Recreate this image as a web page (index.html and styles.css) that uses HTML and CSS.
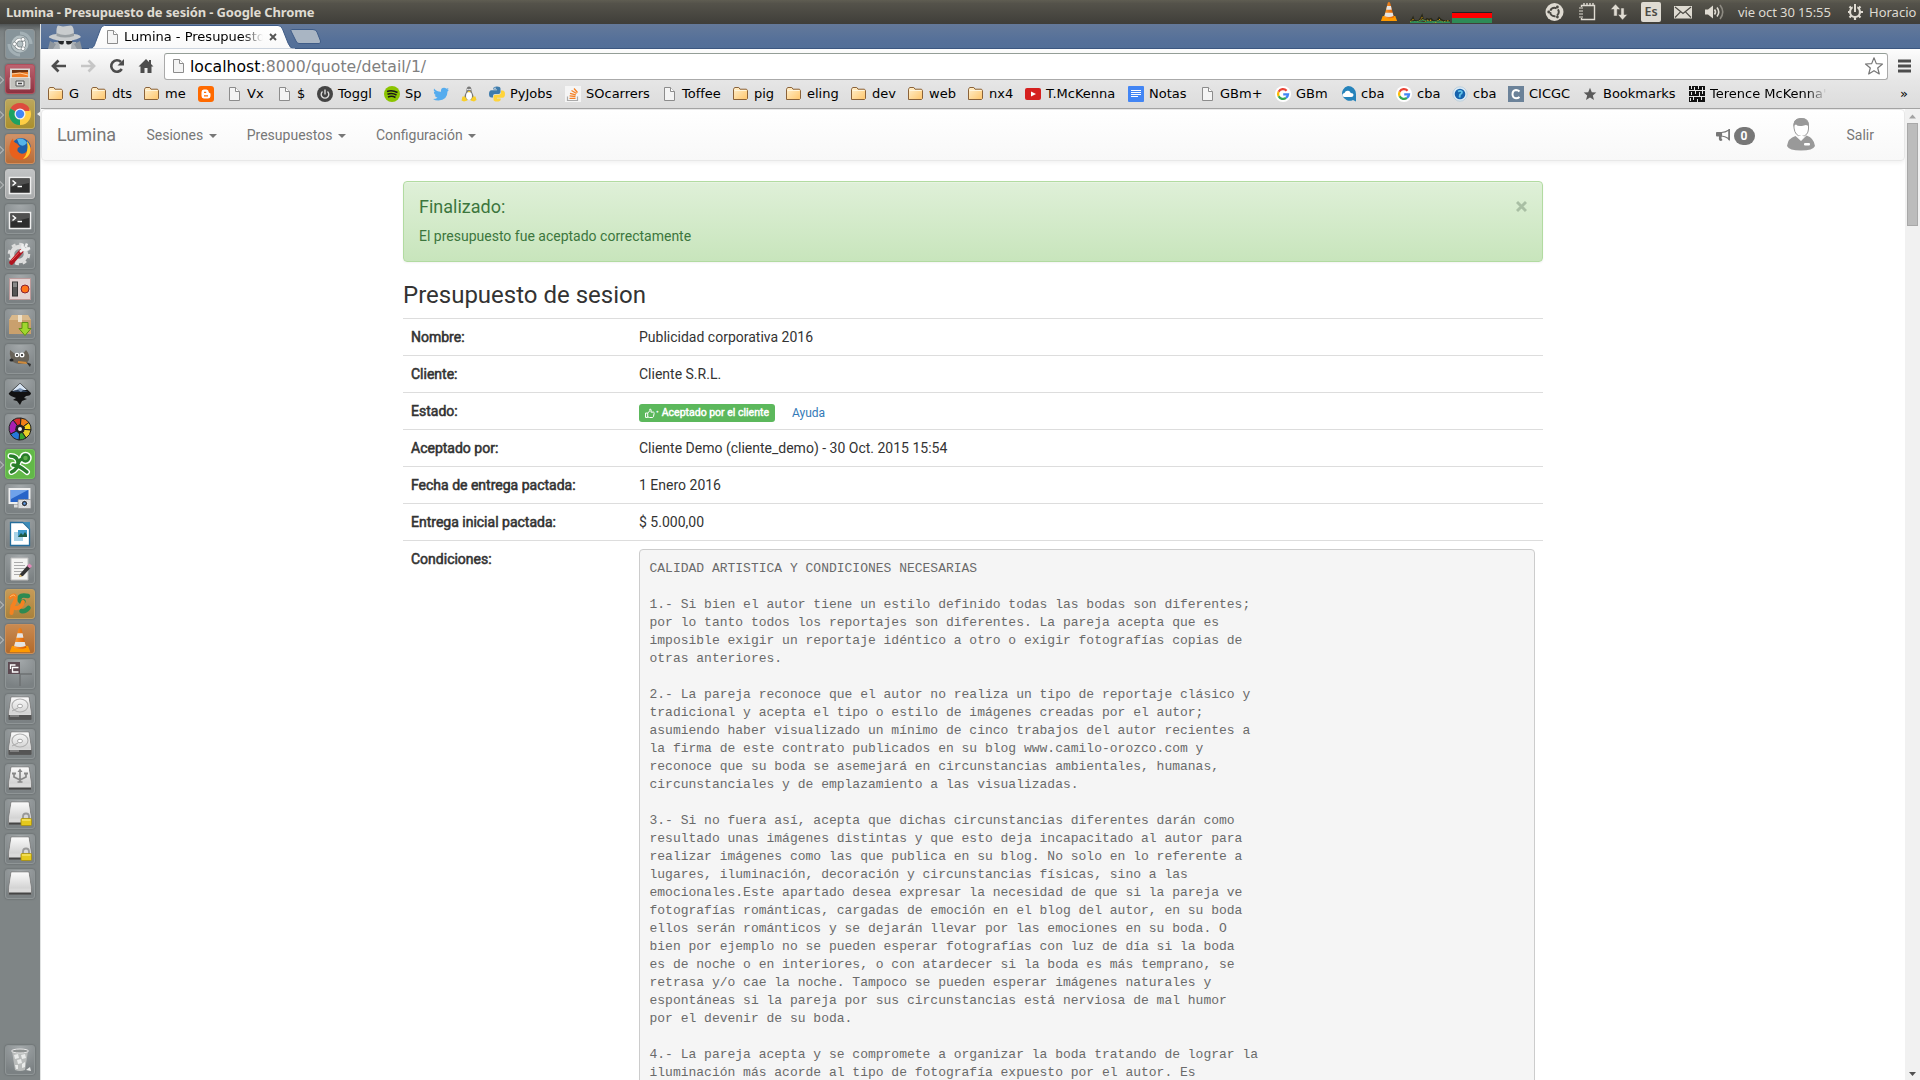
FILE: index.html
```html
<!DOCTYPE html>
<html lang="es">
<head>
<meta charset="utf-8">
<title>Lumina - Presupuesto de sesión</title>
<link rel="stylesheet" href="styles.css">
</head>
<body>
<svg class="defs" aria-hidden="true">
  <defs>
    <linearGradient id="gFolder" x1="0" y1="0" x2="1" y2="1"><stop offset="0" stop-color="#fff0cf"/><stop offset="1" stop-color="#ffc66b"/></linearGradient>
    <linearGradient id="gTab" x1="0" y1="0" x2="0" y2="1"><stop offset="0" stop-color="#fff"/><stop offset="1" stop-color="#f9f9f9"/></linearGradient>
    <linearGradient id="gDrive" x1="0" y1="0" x2="0" y2="1"><stop offset="0" stop-color="#fafafa"/><stop offset="1" stop-color="#d2d2d2"/></linearGradient>
    <linearGradient id="gCone" x1="0" y1="0" x2="1" y2="0"><stop offset="0" stop-color="#ffa033"/><stop offset="1" stop-color="#d85a00"/></linearGradient>
    <symbol id="folder" viewBox="0 0 16 16"><path d="M.5 13.500V3.200L1.600 1.500H5.800L7 3.200H13.500L14.500 4.500V12.500L13.500 13.500Z" fill="url(#gFolder)" stroke="#8a6239"/><path d="M1.500 4.500H13.500" stroke="#fff6dd"/></symbol>
    <symbol id="page" viewBox="0 0 16 16"><path d="M3.500 1.500H9.500L13.500 5.500V14.500H3.500Z" fill="#f4f4f4" stroke="#8c8c8c"/><path d="M9.500 1.500V5.500H13.500" fill="#fff" stroke="#8c8c8c"/></symbol>
    <symbol id="google" viewBox="0 0 16 16"><circle cx="8" cy="8" r="8" fill="#fff"/><g fill="none" stroke-width="2.300"><path d="M11.600 4.700A5 5 0 0 0 3.600 5.700" stroke="#ea4335"/><path d="M3.600 5.700A5 5 0 0 0 3.600 10.300" stroke="#fbbc05"/><path d="M3.600 10.300A5 5 0 0 0 11 11.900" stroke="#34a853"/><path d="M11 11.900A5 5 0 0 0 13 8.300H8.200" stroke="#4285f4"/></g></symbol>
    <symbol id="cone" viewBox="0 0 20 22"><path d="M3 16L1 21.500H19L17 16Z" fill="#ff9a00"/><path d="M10 0.500C9 0.500 8.600 1.500 8.400 2.500L4.500 17.500Q10 20 15.500 17.500L11.600 2.500C11.400 1.500 11 .500 10 .500Z" fill="url(#gCone)"/><path d="M7.800 5H12.200L13 9H6.900ZM5.900 12.500H14.100L15 16Q10 18 5 16Z" fill="#e4e4e4"/></symbol>
    <symbol id="term" viewBox="0 0 30 30"><rect x="4.500" y="8.500" width="21" height="16" fill="#2d2d2d" stroke="#eee" stroke-width="1.500"/><path d="M6 10H24V14L6 18Z" fill="#505050"/><path d="M7.500 11.500L10.500 14L7.500 16.500M12.500 17.500H17" fill="none" stroke="#fff" stroke-width="1.500"/></symbol>
    <symbol id="drive" viewBox="0 0 30 30"><path d="M6 3H24L26.500 20V25H3.500V20Z" fill="#dadada" stroke="#777" stroke-width=".8"/><path d="M6.500 3.500H23.500L26 19.500H4Z" fill="url(#gDrive)"/><path d="M4 23.500H26V25.500H4Z" fill="#454545"/></symbol>
    <symbol id="hdd" viewBox="0 0 30 30"><use href="#drive"/><path d="M3.500 21H26.500V25.500H3.500Z" fill="#555"/><path d="M5 22H14" stroke="#aaa"/><ellipse cx="15" cy="11.500" rx="8" ry="6.500" fill="none" stroke="#b0b0b0" stroke-width="1.200"/><ellipse cx="15" cy="12" rx="2.500" ry="1.800" fill="#fff" stroke="#a8a8a8"/><path d="M7 17L13 14" stroke="#aaa"/></symbol>
    <symbol id="lockdrive" viewBox="0 0 30 30"><use href="#drive"/><path d="M18 20V17.500A3 3 0 0 1 24 17.500V20" fill="none" stroke="#999" stroke-width="1.800"/><rect x="16" y="19.500" width="10.500" height="7" rx="1" fill="#e5c91d" stroke="#a88f0c" stroke-width=".8"/><path d="M17 21H25.500" stroke="#fff18a"/></symbol>
  </defs>
</svg>

<div class="desktop">
  <header class="panel">
    <div class="panel-title">Lumina - Presupuesto de sesión - Google Chrome</div>
    <div class="indicators">
      <svg width="18" height="22"><use href="#cone" y="1" height="21"/></svg>
      <svg width="40" height="23"><path d="M0 22.500H40" stroke="#2e8b57" stroke-width="1"/><path d="M0 21L2 20L3 18L4 21H9L11 18L12 16L13 20L15 21L17 19L19 20L21 19L23 21H27L29 18L31 20L33 21H40" fill="none" stroke="#2a2a1a" stroke-width="2"/><path d="M0 21.500L2 21L3 19.500L4 21.500H9L11 19L12 17.500L13 20L15 21.500L17 20L19 21L21 20L23 22H27L29 19L31 21L33 22L36 21H40" fill="none" stroke="#ffb400" stroke-dasharray="1.500 1.500"/><path d="M0 22L11 21L13 20L20 22L28 21L33 22H40" fill="none" stroke="#2e8b57"/></svg>
      <svg width="40" height="24"><path d="M0 12H40V13H0Z" fill="#222"/><path d="M0 13H40V18H0Z" fill="#f00"/><path d="M0 18H40V23H0Z" fill="#2e8b57"/></svg>
      <svg width="19" height="24"><circle cx="9.500" cy="12" r="9" fill="#dfdbd2"/><circle cx="9.500" cy="12" r="4.300" fill="none" stroke="#4b4943" stroke-width="2" stroke-dasharray="7.500 1.500" stroke-dashoffset="3.500"/><g fill="#4b4943"><circle cx="3.700" cy="12" r="1.400"/><circle cx="12.400" cy="7" r="1.400"/><circle cx="12.400" cy="17" r="1.400"/></g></svg>
      <svg width="17" height="24"><g fill="none" stroke="#dfdbd2"><path d="M2.500 7V5.500H15.500V19.500H2.500V18M5 3V6M8 3V6M11 3V6M14 3V6" stroke-width="1.400"/><path d="M0 8H4M0 11H4M0 14H4M0 17H4" stroke-width="1.200"/></g></svg>
      <svg width="18" height="24"><path d="M5.500 4L10.500 9.500H7.200V16H3.800V9.500H.500ZM12.500 20L7.800 14.500H10.900V8H14.100V14.500H17.500Z" fill="#dfdbd2" stroke="#4b4943" stroke-width=".5"/></svg>
      <span class="kbd">Es</span>
      <svg width="18" height="24"><rect y="6" width="18" height="12.500" fill="#dfdbd2"/><path d="M1 7L9 13.500L17 7M1 17.500L6.500 11.800M17 17.500L11.500 11.800" fill="none" stroke="#4b4943" stroke-width="1.200"/></svg>
      <svg width="20" height="24"><path d="M0 9.500H3L8 5.500V18.500L3 14.500H0Z" fill="#dfdbd2"/><path d="M9.500 9.500Q11.500 12 9.500 14.500M12 7.500Q15.500 12 12 16.500" fill="none" stroke="#dfdbd2" stroke-width="1.600"/><path d="M15 5Q20.500 12 15 19" fill="none" stroke="#8d8a82" stroke-width="1.600"/></svg>
      <span class="clock">vie oct 30 15:55</span>
      <svg width="16" height="24"><circle cx="8" cy="12" r="5" fill="none" stroke="#dfdbd2" stroke-width="2.200"/><path d="M8 17V20M1 12H3M13 12H16M2.500 6.500L4.500 8.500M13.500 6.500L11.500 8.500M2.500 17.500L4.500 15.500M13.500 17.500L11.500 15.500" stroke="#dfdbd2" stroke-width="2.200"/><path d="M8 4V12" stroke="#4b4943" stroke-width="4.500"/><path d="M8 4V12" stroke="#dfdbd2" stroke-width="2"/></svg>
      <span class="user">Horacio</span>
    </div>
  </header>

  <div class="workspace">
    <aside class="launcher">
      <div class="tile t-ubuntu"><svg viewBox="0 0 30 30"><path d="M15 4A11 11 0 0 1 26 15M15 26A11 11 0 0 1 4 15" stroke="#a3b0b5" stroke-width="3" fill="none"/><circle cx="15" cy="15" r="8.500" fill="#b5c0c3"/><circle cx="15" cy="15" r="4.400" fill="none" stroke="#777f82" stroke-width="3.400"/><circle cx="15" cy="15" r="4.400" fill="none" stroke="#fff" stroke-width="2" stroke-dasharray="7.700 1.500" stroke-dashoffset="3.500"/><g fill="#fff" stroke="#777f82" stroke-width=".7"><circle cx="9.500" cy="15" r="1.900"/><circle cx="18" cy="10.300" r="1.900"/><circle cx="18" cy="19.700" r="1.900"/></g></svg></div>
      <div class="tile t-red run"><svg viewBox="0 0 30 30"><path d="M5 4.500H25V15H5Z" fill="#d8d8d4"/><path d="M7 6H23V14H7Z" fill="#6b3414"/><path d="M7 9L23 8V14H7Z" fill="#f07c24"/><path d="M7 10L15 9L23 11" stroke="#ffd0a0" fill="none"/><path d="M5 13.500H25V25H5Z" fill="#c2c2be" stroke="#eee" stroke-width=".7"/><path d="M11 17H19V22H11Z" fill="#eee" stroke="#555"/><path d="M13 19.500H17" stroke="#444" stroke-width="1.500"/></svg></div>
      <div class="tile t-yellow run active"><svg viewBox="0 0 30 30"><path d="M15 15L5.470 9.500A11 11 0 0 1 24.530 9.500Z" fill="#dd4b3e"/><path d="M15 15L5.470 9.500A11 11 0 0 0 15 26Z" fill="#1ca261"/><path d="M15 15L15 26A11 11 0 0 0 24.530 9.500Z" fill="#ffce44"/><path d="M15 9.500H24.500V12H15Z" fill="#dd4b3e"/><circle cx="15" cy="15" r="5.500" fill="#f2f2f2"/><circle cx="15" cy="15" r="4.200" fill="#4285f4"/></svg></div>
      <div class="tile t-orange run"><svg viewBox="0 0 30 30"><circle cx="16" cy="14" r="10" fill="#1e5fa8"/><path d="M12 5Q19 3 22 9Q18 14 14 10Z" fill="#55b4e8"/><path d="M5 10Q6 6 8 4.500Q8 8 12 9.500L15 13Q12 13 12.500 17Q15 21 20 19Q24 16 23.500 10Q27 14 26 18Q24 26 15 26Q6 25 4.500 17Q4 13 5 10Z" fill="#e8601c"/><path d="M22 7Q27 13 25 19Q23 24 18 25Q24 19 22 7Z" fill="#ffc933"/></svg></div>
      <div class="tile t-light run"><svg viewBox="0 0 30 30"><use href="#term"/></svg></div>
      <div class="tile"><svg viewBox="0 0 30 30"><use href="#term"/></svg></div>
      <div class="tile"><svg viewBox="0 0 30 30"><circle cx="14" cy="15" r="7" fill="none" stroke="#ddd" stroke-width="4.500"/><circle cx="14" cy="15" r="10" fill="none" stroke="#ddd" stroke-width="2.500" stroke-dasharray="4 3.850"/><path d="M6.500 23.500L16 12.500" stroke="#b01520" stroke-width="4.500" stroke-linecap="round"/><path d="M6.500 21.500L14 13.500" stroke="#f06060" stroke-width="1"/><path d="M15 13L20 8.500M18 5Q16 9.500 20.500 11L25 9M22 4.500L20.500 8" stroke="#eee" stroke-width="2.500" fill="none"/></svg></div>
      <div class="tile"><svg viewBox="0 0 30 30"><rect x="4.500" y="4.500" width="21" height="21" fill="#e3d3d3" stroke="#b99"/><rect x="7.500" y="8" width="5" height="14" fill="#555" stroke="#333"/><path d="M8 8.500H12V13H8Z" fill="#888"/><circle cx="20" cy="15" r="4" fill="#ff7418" stroke="#823"/></svg></div>
      <div class="tile"><svg viewBox="0 0 30 30"><path d="M7 6H23L26 11V25H4V11Z" fill="#c9a06d"/><path d="M7 6H23L26 11H4Z" fill="#d9b98c"/><path d="M13 6H17V13H13Z" fill="#eee0c8"/><path d="M17 13.500H23V19.500H26L20 26.500L14 19.500H17Z" fill="#9fd62d" stroke="#5d8f12"/></svg></div>
      <div class="tile"><svg viewBox="0 0 30 30"><path d="M5 6L10 10Q17 12 21 6Q25 10 24 16Q22 20 14 20Q7 19 6 15Q4 10 5 6Z" fill="#686258"/><circle cx="12" cy="11" r="2.300" fill="#fff"/><circle cx="17" cy="11" r="2.500" fill="#fff"/><g fill="#222"><circle cx="12" cy="11" r="1"/><circle cx="17" cy="11" r="1.100"/><ellipse cx="6.500" cy="16" rx="2" ry="1.500"/></g><path d="M13 18L22 19" stroke="#d08a3a" stroke-width="2"/><path d="M21 18L26 20L25 23Z" fill="#333"/></svg></div>
      <div class="tile"><svg viewBox="0 0 30 30"><path d="M15 4L26 14Q26 17 21 17L19 19L22 20L17 22L15 26L12 22L8 21L11 19L6 17Q3 15 4 14Z" fill="#111"/><path d="M15 4.500L22 11L18 11L16 13L13 11L7 12Z" fill="#d9e6f5"/><path d="M7 13H23L15 9Z" fill="#3d5a80" opacity=".6"/></svg></div>
      <div class="tile"><svg viewBox="0 0 30 30"><g stroke="#222" stroke-width="1"><path d="M15 15L8 6A11 11 0 0 1 16 4Z" fill="#d82c2c"/><path d="M15 15L16 4A11 11 0 0 1 24 8.500Z" fill="#f08018"/><path d="M15 15L24 8.500A11 11 0 0 1 26 16Z" fill="#f7d417"/><path d="M15 15L26 16A11 11 0 0 1 21 24Z" fill="#e8d028"/><path d="M15 15L21 24A11 11 0 0 1 14 26Z" fill="#38a52c"/><path d="M15 15L14 26A11 11 0 0 1 5.500 20Z" fill="#2878d8"/><path d="M15 15L5.500 20A11 11 0 0 1 8 6Z" fill="#a81eb0"/></g><path d="M15 10L20 13L19 18L14 20L10 16L11 12Z" fill="#222"/><circle cx="15" cy="15" r="2" fill="#eee"/></svg></div>
      <div class="tile t-green run"><svg viewBox="0 0 30 30"><g fill="none" stroke-linecap="round"><path d="M5.500 7Q12 7 13 13Q13 20 6.500 23M8 16Q14 16 22 23M13 15Q14 11 17 10" stroke="#fff" stroke-width="6"/><circle cx="20.500" cy="9" r="4" stroke="#fff" stroke-width="4.500"/><path d="M5.500 7Q12 7 13 13Q13 20 6.500 23M8 16Q14 16 22 23M13 15Q14 11 17 10" stroke="#287d2a" stroke-width="3.400"/><circle cx="20.500" cy="9" r="3.500" fill="#5fae4c" stroke="#287d2a" stroke-width="2.500"/></g></svg></div>
      <div class="tile"><svg viewBox="0 0 30 30"><rect x="4.500" y="5" width="20" height="14" fill="#2864c8" stroke="#eee" stroke-width="2"/><path d="M6 6H23L6 15Z" fill="#6fa2ea"/><path d="M9 22H15" stroke="#ddd" stroke-width="3"/><rect x="13" y="15.500" width="13" height="9" rx="1" fill="#d9dbdd" stroke="#888" stroke-width=".7"/><circle cx="19.500" cy="19.500" r="3.200" fill="#30363f" stroke="#fff"/><circle cx="19.500" cy="19.500" r="1.200" fill="#5d9be8"/></svg></div>
      <div class="tile"><svg viewBox="0 0 30 30"><path d="M5.500 3.500H18L24.500 10V26.500H5.500Z" fill="#fff" stroke="#256d9b" stroke-width="1.300"/><path d="M18 3H25V10Z" fill="#3d8cb8"/><path d="M9 13H18V22H9Z" fill="#a8d3e8"/><path d="M13 11H22V18H13Z" fill="#3f9acb"/><path d="M13 18L16 14L18 16L20 13L22 16V18Z" fill="#1d5b46"/></svg></div>
      <div class="tile"><svg viewBox="0 0 30 30"><path d="M6 4H23V26H6Z" fill="#f4f4f2" stroke="#bbb"/><path d="M9 8.500H18M9 11.500H20M9 14.500H20M9 17.500H18M9 20.500H15" stroke="#aaa"/><path d="M15 20L23 11L26 13.500L18 22L14 23Z" fill="#333"/><path d="M22 12L24.500 9.500L27 12L25 14.500Z" fill="#e38ab9"/><path d="M14 23L15 20.500L17.500 22.500Z" fill="#ecc97c"/></svg></div>
      <div class="tile t-gold run"><svg viewBox="0 0 30 30"><g fill="none" stroke-linecap="round"><path d="M23 7Q14 5 14.500 10.500Q15 14 18.500 12.500" stroke="#2d8a51" stroke-width="4.500"/><path d="M23.500 19Q20 23 16.500 22" stroke="#2d8a51" stroke-width="4.500"/><path d="M5.500 8.500Q9 4.500 10.500 8Q11 12 7.500 17L6.500 24M10 19Q16 20 18 13" stroke="#f58220" stroke-width="4"/><path d="M5.500 7.500Q9 4.500 10 7" stroke="#ffbd70"/></g></svg></div>
      <div class="tile t-vlc run"><svg viewBox="-3 -3 26 26"><use href="#cone" width="20" height="22"/></svg></div>
      <div class="tile"><svg viewBox="0 0 30 30"><path d="M3 3H15V15H3Z" fill="#5d4a52"/><path d="M15 15V27M15 15H27" stroke="#6d7173" stroke-width="1.500"/><path d="M5.500 10V6H10.500M13.500 8.500H7.500V13H13.500" fill="none" stroke="#fff" stroke-width="1.300"/></svg></div>
      <div class="tile"><svg viewBox="0 0 30 30"><use href="#hdd"/></svg></div>
      <div class="tile"><svg viewBox="0 0 30 30"><use href="#hdd"/></svg></div>
      <div class="tile"><svg viewBox="0 0 30 30"><use href="#drive"/><path d="M15 18V6M15 16L9 13V9.500M15 16L21 13V9.500M12.500 18H17.500" fill="none" stroke="#888" stroke-width="1.700"/><path d="M12.500 8L15 4.500L17.500 8Z" fill="#888"/><path d="M7 9.500H11M19 9.500H23" stroke="#888" stroke-width="2"/></svg></div>
      <div class="tile"><svg viewBox="0 0 30 30"><use href="#lockdrive"/></svg></div>
      <div class="tile"><svg viewBox="0 0 30 30"><use href="#lockdrive"/></svg></div>
      <div class="tile"><svg viewBox="0 0 30 30"><use href="#drive"/></svg></div>
      <div class="tile trash"><svg viewBox="0 0 30 30"><path d="M7 6L10 25Q15 27 20 25L23 6Z" fill="#b9bcbb"/><ellipse cx="15" cy="6" rx="8.500" ry="2" fill="#8e9291" stroke="#e5e5e5"/><g fill="#e9ebea"><path d="M9 10L13 9L14 13L10 14ZM16 10L20 9L21 13L17 14ZM12 15L16 14L17 18L13 19ZM10 20L13 20L13 24L11 24ZM17 19L20 17L20 22L17 23ZM21 25L25 22L26 26Z"/></g></svg></div>
    </aside>

    <section class="browser">
      <div class="tabstrip">
        <svg class="incognito" width="34" height="24" viewBox="0 0 34 24"><path d="M6 17L3 24H31L28 17Z" fill="#aab0b5"/><path d="M11 14H24L23 24H12Z" fill="#e0e2e3"/><path d="M10 0.500L15 1.500L23 .500Q26 1 26 9Q34 10 32.500 12.500Q17 20 1 12.500Q0 10 8.500 9Q8 2 10 .500Z" fill="#c9ccce"/><path d="M8.500 8Q17 12 26 8V11Q17 14 8.500 11Z" fill="#999fa3"/><path d="M10 16H16L15.500 19Q12 20.500 10.500 17.500ZM18 16H24.500L24 17.500Q22.500 20.500 18.500 19Z" fill="#26282a"/><path d="M2 16L8 19L5 24H0ZM32 16L26 19L29 24H34Z" fill="#8d959d"/></svg>
        <div class="tab">
          <svg class="tab-shape" width="206" height="25" viewBox="0 0 206 25"><path d="M0 25C5 24.500 5.500 21 7 17L11.500 5Q12.500 1.500 15.500 1.500H189Q192 1.500 193.500 5L199 19Q201 24.500 205 25Z" fill="url(#gTab)" stroke="#3f5c87" stroke-width="1"/><path d="M0 25H206" stroke="#fdfdfd" stroke-width="1"/></svg>
          <svg class="tab-icon" width="16" height="16"><use href="#page"/></svg>
          <span class="tab-title">Lumina - Presupuesto</span>
          <svg class="tab-close" width="8" height="8"><path d="M1 1L7 7M7 1L1 7" stroke="#555" stroke-width="1.900"/></svg>
        </div>
        <svg class="newtab" width="32" height="16"><path d="M1.500 .500H23Q26 .500 27 3L30.500 12Q31 14.500 29 14.500H9Q7 14.500 6 12L1 2Q.500 .500 1.500 .500Z" fill="#a9b5c3" stroke="#3f5c87"/></svg>
      </div>

      <div class="toolbar">
        <svg width="16" height="16"><path d="M7.500 2.500L2 8L7.500 13.500M2.500 8H15" fill="none" stroke="#4d4d4d" stroke-width="2.700"/></svg>
        <svg width="16" height="16"><path d="M8.500 2.500L14 8L8.500 13.500M13.500 8H1" fill="none" stroke="#c6c6c6" stroke-width="2.700"/></svg>
        <svg width="16" height="16"><path d="M12.800 11A5.700 5.700 0 1 1 12 4" fill="none" stroke="#4d4d4d" stroke-width="2.600"/><path d="M15 1V7.500H8.500Z" fill="#4d4d4d"/></svg>
        <svg width="16" height="16"><path d="M8 1L11 4V2H13V6L15.500 8.500H13.500V15H9.500V10H6.500V15H2.500V8.500H.500Z" fill="#4d4d4d"/></svg>
        <div class="omnibox">
          <svg width="16" height="16"><use href="#page"/></svg>
          <span class="url"><b>localhost</b>:8000/quote/detail/1/</span>
          <svg class="star" width="20" height="20"><path d="M10 1.800L12.300 7.600L18.500 8L13.700 12L15.300 18L10 14.700L4.700 18L6.300 12L1.500 8L7.700 7.600Z" fill="#fff" stroke="#777" stroke-width="1.200" stroke-linejoin="round"/></svg>
        </div>
        <svg class="menu" width="14" height="14"><path d="M0 2H13M0 7H13M0 12H13" stroke="#4d4d4d" stroke-width="3"/></svg>
      </div>

      <nav class="bookmarks">
        <a><svg><use href="#folder"/></svg>G</a>
        <a><svg><use href="#folder"/></svg>dts</a>
        <a><svg><use href="#folder"/></svg>me</a>
        <a><svg><rect width="16" height="16" rx="3" fill="#ff6a00"/><path d="M5.800 3.500H8.500Q10.500 3.500 10.700 6Q10.800 7 11.800 7Q12.500 7 12.500 8V10.200Q12.300 12.500 10 12.500H5.800Q3.500 12.300 3.500 10V6Q3.500 3.700 5.800 3.500Z" fill="#fff"/><path d="M6 6.300H8.200M6 9.800H10" stroke="#ff6a00" stroke-width="1.300"/></svg></a>
        <a><svg><use href="#page"/></svg>Vx</a>
        <a><svg><use href="#page"/></svg>$</a>
        <a><svg><circle cx="8" cy="8" r="8" fill="#444"/><path d="M5.500 5.500A3.800 3.800 0 1 0 10.500 5.500M8 3.500V8.500" fill="none" stroke="#ddd" stroke-width="1.400"/></svg>Toggl</a>
        <a><svg><circle cx="8" cy="8" r="8" fill="#8bc400"/><path d="M3 5.500Q8 3.500 13.500 6.500M3.500 8.300Q8 6.500 12.500 9M4 11Q8 9.500 11.500 11.500" fill="none" stroke="#181818" stroke-width="1.500"/></svg>Sp</a>
        <a><svg><path d="M1 2.500Q4 6 8 5.800Q7.500 2 11 1.800Q12.500 1.800 13.500 2.800L15.500 2L14.500 4L16 3.700L14.500 5.500Q14.500 14 5.500 14.500Q2 14.500 0 13Q3 13 4.500 11.700Q2 11.300 1.700 9.300H3Q.700 8.300 .800 5.700L2 6Q0 4.500 1 2.500Z" fill="#55acee"/></svg></a>
        <a><svg><path d="M8 .500Q10.500 .500 10.500 4.500Q10.700 6 12 8.500Q13.500 12 11 14H5Q2.500 12 4 8.500Q5.500 6 5.500 4Q5.500 .500 8 .500Z" fill="#777"/><ellipse cx="8" cy="10" rx="3" ry="4" fill="#fff"/><circle cx="6.900" cy="3.500" r=".8" fill="#fff"/><circle cx="9" cy="3.500" r=".8" fill="#fff"/><path d="M6.500 5H10L8 6.500ZM1.500 10.500L4 10.500L6.500 14.500L3 15.500L.500 14.500ZM14.500 10.500H12L9.500 14.500L13 15.500L15.500 14Z" fill="#f9cf29"/></svg></a>
        <a><svg><path d="M8 .500Q11.500 .500 11.500 2.500V6Q11.500 8 9.500 8H6Q4 8 4 10V11.500H2.500Q0 11.500 0 8Q0 4.500 2.500 4.300H8V3.600H4.300V2.500Q4.300 .500 8 .500Z" fill="#3f7cac"/><path d="M8 15.500Q4.500 15.500 4.500 13.500V10.500Q4.500 8.700 6.500 8.700H10Q12 8.500 12 6.500V4.500H13.500Q16 4.700 16 8Q16 11.500 13.500 11.700H8V12.400H11.700V13.500Q11.500 15.500 8 15.500Z" fill="#ffd43b"/><circle cx="6" cy="2.200" r=".7" fill="#fff"/></svg>PyJobs</a>
        <a><svg><rect width="16" height="16" fill="#f5f5f5"/><path d="M2.500 10.500V14.500H12.500V10.500" fill="none" stroke="#aaa" stroke-width="1.200"/><path d="M4.500 12.300H10.500M4.600 9.800L10.500 10.500M5 7.300L10.800 8.800M6.500 4.500L11.500 7.500M9 2.500L12.500 6.500" stroke="#f48024" stroke-width="1.300"/></svg>SOcarrers</a>
        <a><svg><use href="#page"/></svg>Toffee</a>
        <a><svg><use href="#folder"/></svg>pig</a>
        <a><svg><use href="#folder"/></svg>eling</a>
        <a><svg><use href="#folder"/></svg>dev</a>
        <a><svg><use href="#folder"/></svg>web</a>
        <a><svg><use href="#folder"/></svg>nx4</a>
        <a><svg><rect y="2" width="16" height="12" rx="2" fill="#d5201f"/><path d="M6 5.500L11 8L6 10.500Z" fill="#fff"/></svg>T.McKenna</a>
        <a><svg><rect width="16" height="16" rx="1" fill="#4285f4"/><path d="M3 4.500H13M3 6.500H13M3 8.500H13M3 10.500H10" stroke="#fff"/></svg>Notas</a>
        <a><svg><use href="#page"/></svg>GBm+</a>
        <a><svg><use href="#google"/></svg>GBm</a>
        <a><svg><path d="M8 0A7.500 7.500 0 1 0 13 14L16 15.500V8A8 8 0 0 0 8 0Z" fill="#2583bb"/><path d="M4.500 11Q2 10.500 2.500 8.500Q3 7 4.500 7Q5.500 4.300 8.300 4.700Q10.300 5 10.700 7Q13.500 7 13.500 9Q13.500 11 11.300 11Z" fill="#fff"/></svg>cba</a>
        <a><svg><use href="#google"/></svg>cba</a>
        <a><svg><circle cx="8" cy="8" r="7.200" fill="#dceaf4" stroke="#b2cadb" stroke-width=".8"/><circle cx="8" cy="8" r="5.300" fill="#1663ad"/><path d="M6 5.500Q9 4 10 6Q10 8 8 8.500L7.500 11.500" fill="none" stroke="#62c4e8" stroke-width="1.800"/></svg>cba</a>
        <a><svg><rect width="16" height="16" fill="#6b8299"/><path d="M11.500 5.500Q10 4 8 4Q4.500 4.300 4.500 8.300Q4.600 12 8 12.300Q10 12.300 11.500 11" fill="none" stroke="#fff" stroke-width="2"/></svg>CICGC</a>
        <a><svg><path d="M8 1.800L9.800 6.300L14.300 6.500L10.800 9.500L12 14L8 11.500L4 14L5.200 9.500L1.700 6.500L6.200 6.300Z" fill="#5a5a5a"/></svg>Bookmarks</a>
        <a class="fade"><svg><rect width="16" height="16" fill="#111"/><path d="M0 4.500H16M0 10.500H16M2.500 0V3M5.500 1V4M9.500 0V3M13.500 1V4M2.500 6V9M6.500 5V8M10.500 6V10M13.500 5V8M1.500 12V15M4.500 11V14M8.500 13V16M12.500 11V14" stroke="#e5e5e5"/></svg>Terence McKenna's</a>
        <span class="more">»</span>
      </nav>

      <div class="viewport">
        <main class="page">
          <nav class="navbar">
            <span class="brand">Lumina</span>
            <span class="nav-item">Sesiones<i class="caret"></i></span>
            <span class="nav-item">Presupuestos<i class="caret"></i></span>
            <span class="nav-item">Configuración<i class="caret"></i></span>
            <span class="news"><svg width="15" height="14"><path d="M13 2V11.500L12 10.300Q9 8.200 5.500 8V4.500Q9.500 4.300 12 2.500Z" fill="none" stroke="#777" stroke-width="1.200"/><path d="M0 4.500Q0 4 1 4H6V8.500H5.500Q5 10.500 6.500 12Q5 13.500 3.500 12.500Q2.500 10.500 3 8.500H1Q0 8.500 0 7.500ZM12.500 1H14V12H12.500Z" fill="#777"/></svg><span class="badge">0</span></span>
            <svg class="avatar" width="28" height="33" viewBox="0 0 28 33"><path d="M7 10Q6 1 13 .500Q22 -.500 21.500 8V11Q21 18 14.500 18.500Q8 18 7 10Z" fill="#fff" stroke="#999" stroke-width="1"/><path d="M6.500 9Q5.500 1 13 .300Q22 -.500 22 9Q20 6 17 7.500Q11 9 9 6.500Q7 6.500 6.500 9Z" fill="#999"/><path d="M8.500 18L14 23L19.500 17.500Q27 20 28 28Q26 32.500 14 32.500Q2 32.500 0 28Q1 20 8.500 18Z" fill="#999"/><path d="M11 18L14 21L17.500 18" fill="#fff"/><rect x="17" y="25" width="6" height="2.500" rx="1" fill="#fff"/></svg>
            <span class="exit">Salir</span>
          </nav>

          <div class="container">
            <div class="alert">
              <svg class="alert-close" width="11" height="11"><path d="M1 1L10 10M10 1L1 10" stroke="#a9bfa4" stroke-width="2.900"/></svg>
              <h4>Finalizado:</h4>
              <p>El presupuesto fue aceptado correctamente</p>
            </div>
            <h3>Presupuesto de sesion</h3>
            <dl class="details">
              <dt>Nombre:</dt><dd>Publicidad corporativa 2016</dd>
              <dt>Cliente:</dt><dd>Cliente S.R.L.</dd>
              <dt>Estado:</dt><dd class="state"><span class="label"><svg width="10" height="11" viewBox="0 0 11 11"><path d="M.600 5H3V9.800H.600ZM3 5L5.300 2.500V.700H6.200Q7.300 1.500 6.500 4H9.500Q10.400 4.300 10 5.500L9.300 9Q9 9.900 8 9.900H5L3 9.200" fill="none" stroke="#fff" stroke-width="1.100"/></svg><span class="dot">·</span>Aceptado por el cliente</span><a class="help">Ayuda</a></dd>
              <dt>Aceptado por:</dt><dd>Cliente Demo (cliente_demo) - 30 Oct. 2015 15:54</dd>
              <dt>Fecha de entrega pactada:</dt><dd>1 Enero 2016</dd>
              <dt>Entrega inicial pactada:</dt><dd>$ 5.000,00</dd>
              <dt>Condiciones:</dt><dd class="terms"><pre>CALIDAD ARTISTICA Y CONDICIONES NECESARIAS

1.- Si bien el autor tiene un estilo definido todas las bodas son diferentes;
por lo tanto todos los reportajes son diferentes. La pareja acepta que es
imposible exigir un reportaje idéntico a otro o exigir fotografías copias de
otras anteriores.

2.- La pareja reconoce que el autor no realiza un tipo de reportaje clásico y
tradicional y acepta el tipo o estilo de imágenes creadas por el autor;
asumiendo haber visualizado un mínimo de cinco trabajos del autor recientes a
la firma de este contrato publicados en su blog www.camilo-orozco.com y
reconoce que su boda se asemejará en circunstancias ambientales, humanas,
circunstanciales y de emplazamiento a las visualizadas.

3.- Si no fuera así, acepta que dichas circunstancias diferentes darán como
resultado unas imágenes distintas y que esto deja incapacitado al autor para
realizar imágenes como las que publica en su blog. No solo en lo referente a
lugares, iluminación, decoración y circunstancias físicas, sino a las
emocionales.Este apartado desea expresar la necesidad de que si la pareja ve
fotografías románticas, cargadas de emoción en el blog del autor, en su boda
ellos serán románticos y se dejarán llevar por las emociones en su boda. O
bien por ejemplo no se pueden esperar fotografías con luz de día si la boda
es de noche o en interiores, o con atardecer si la boda es más temprano, se
retrasa y/o cae la noche. Tampoco se pueden esperar imágenes naturales y
espontáneas si la pareja por sus circunstancias está nerviosa de mal humor
por el devenir de su boda.

4.- La pareja acepta y se compromete a organizar la boda tratando de lograr la
iluminación más acorde al tipo de fotografía expuesto por el autor. Es
</pre></dd>
            </dl>
          </div>
        </main>
        <div class="scrollbar"><svg width="15" height="13"><path d="M4 9.500L7.500 5.500L11 9.500Z" fill="#a3a3a3"/></svg><div class="thumb"></div><svg class="down" width="15" height="13"><path d="M4 5L7.500 9L11 5Z" fill="#505050"/></svg></div>
      </div>
    </section>
  </div>
</div>
</body>
</html>
```
FILE: styles.css
```css
* { box-sizing: border-box; }
body { margin: 0; overflow: hidden; background: #fff; }
.defs { display: block; width: 0; height: 0; overflow: hidden; }
.desktop { width: 1920px; height: 1080px; display: flex; flex-direction: column; overflow: hidden; }

/* System panel */
.panel { height: 24px; flex: none; display: flex; justify-content: space-between; background: linear-gradient(#5f5d52, #54524a 15%, #3f3e39); color: #dfdbd2; font: 13px/24px "Noto Sans", sans-serif; }
.panel-title { padding-left: 6px; font-weight: bold; letter-spacing: -0.15px; white-space: nowrap; }
.indicators { width: 540px; display: grid; grid-template-columns: 30px 42px 93px 34px 31px 31px 33px 31px 33px 109px 22px 51px; white-space: nowrap; }
.indicators svg { display: block; }
.kbd { width: 20px; height: 20px; margin-top: 2px; border-radius: 2px; background: #dfdbd2; color: #4b4943; line-height: 20px; text-align: center; font-size: 12.500px; font-weight: 600; }
.clock { letter-spacing: -0.1px; }

/* Launcher */
.workspace { flex: 1; min-height: 0; display: flex; }
.launcher { width: 41px; flex: none; display: flex; flex-direction: column; gap: 5px; padding: 5px 0 5px 5px; background: linear-gradient(#4f5354, #7a8081 7px, #7f8586 14px); border-right: 1px solid #e0e2e2; }
.tile { position: relative; width: 30px; height: 30px; flex: none; border-radius: 3px; background: radial-gradient(circle at 50% 0, #a3a8aa, #7b8183 85%); border: 1px solid #8f9596; box-shadow: 0 0 2px #55595b; }
.tile svg { display: block; width: 30px; height: 30px; margin: -1px; }
.t-ubuntu { background: #87949a; }
.t-red { background: linear-gradient(#bd6370, #8c3240); border-color: #b04f5c; }
.t-yellow { background: linear-gradient(#bca75d, #aa8f2d); border-color: #c4b066; }
.t-orange { background: linear-gradient(#cf9269, #b86c37); border-color: #cf8f60; }
.t-light { background: linear-gradient(#c2c4c5, #aaacad); border-color: #c4c4c4; }
.t-green { background: #62b848; border-color: #76c45e; }
.t-gold { background: linear-gradient(#c69b58, #a8813c); border-color: #c6a260; }
.t-vlc { background: linear-gradient(#c98a50, #b16a2c); border-color: #ca8f5a; }
.trash { margin-top: auto; }
.run::before { content: ""; position: absolute; left: -9px; top: 12px; width: 4px; height: 4px; border: 1px solid #b5b8b9; transform: rotate(45deg); }
.active::after { content: ""; position: absolute; left: 31px; top: 11px; border: 3px solid transparent; border-right: 4px solid #eee; border-left: 0; }

/* Browser chrome */
.browser { flex: 1; min-width: 0; display: flex; flex-direction: column; font-family: "DejaVu Sans", sans-serif; }
.tabstrip { height: 25px; flex: none; display: flex; background: linear-gradient(#64799a, #557099 65%, #526f98 96%, #3c5780 96%); }
.incognito { margin: 1px 0 0 7px; }
.tab { position: relative; width: 206px; margin-left: 7px; height: 25px; display: flex; align-items: center; padding: 0 0 0 15px; }
.tab-shape { position: absolute; left: 0; top: 0; }
.tab-icon, .tab-title, .tab-close { position: relative; flex: none; }
.tab-title { width: 139px; margin-left: 4px; font-size: 13px; line-height: 23px; overflow: hidden; white-space: nowrap; -webkit-mask-image: linear-gradient(90deg, #000 118px, transparent 139px); mask-image: linear-gradient(90deg, #000 118px, transparent 139px); }
.tab-close { margin-left: 6px; }
.newtab { margin: 5px 0 0 -5px; }
.toolbar { height: 31px; flex: none; display: flex; align-items: center; padding: 3px 7px 0 10px; gap: 13px; background: linear-gradient(#fdfdfd, #e7e7e7); }
.toolbar > svg { flex: none; }
.omnibox { flex: 1; height: 27px; margin-left: -3px; display: flex; align-items: center; padding: 0 3px 0 5px; background: #fff; border: 1px solid #aaa; border-top-color: #949e97; border-radius: 3px; }
.url { flex: 1; margin-left: 4px; font-size: 15.700px; line-height: 25px; color: #808080; white-space: nowrap; }
.url b { font-weight: normal; color: #000; }
.toolbar .menu { margin: 0 1px 0 -3px; }
.bookmarks { height: 29px; flex: none; display: grid; align-items: center; padding: 0 0 1px 7px; background: linear-gradient(#e6e6e6, #dcdcdc); border-bottom: 1px solid #a3a3a3; font-size: 13px; color: #000; white-space: nowrap;
  grid-template-columns: 43px 53px 54px 28px 50px 41px 67px 49px 28px 28px 76px 96px 72px 53px 65px 57px 60px 57px 103px 71px 76px 65px 56px 56px 56px 74px 107px 211px 12px; }
.bookmarks a { display: flex; align-items: center; gap: 5px; }
.bookmarks svg { width: 16px; height: 16px; flex: none; }
.bookmarks .fade { width: 138px; overflow: hidden; -webkit-mask-image: linear-gradient(90deg, #000 118px, transparent 138px); mask-image: linear-gradient(90deg, #000 118px, transparent 138px); }

/* Page */
.viewport { flex: 1; min-height: 0; display: flex; background: #fff; }
.page { flex: 1; min-width: 0; overflow: hidden; font: 14px/20px Roboto, sans-serif; color: #333; }
.navbar { height: 52px; display: flex; align-items: center; padding: 0 30px 0 15px; border: 1px solid #e8e8e8; border-radius: 4px; background: linear-gradient(#fff, #f8f8f8); box-shadow: 0 1px 5px rgba(0,0,0,.075); color: #777; }
.brand { width: 89.500px; font-size: 18px; }
.nav-item { display: flex; align-items: center; margin-right: 30px; }
.caret { margin: 2px 0 0 5.500px; border: 4px solid transparent; border-top-color: #777; border-bottom: 0; }
.news { display: flex; align-items: center; gap: 3px; margin-left: auto; }
.badge { min-width: 21px; height: 18px; margin-top: 2px; border-radius: 9px; background: #777; color: #fff; font-size: 12px; line-height: 18px; font-weight: bold; text-align: center; }
.avatar { margin: -1px 32px 0 32px; }
.container { width: 1140px; margin: 20px auto 0; }
.alert { position: relative; height: 81px; padding: 15px; border: 1px solid #b2dba1; border-radius: 4px; background: linear-gradient(#dff0d8, #c8e5bc); box-shadow: inset 0 1px 0 rgba(255,255,255,.25), 0 1px 2px rgba(0,0,0,.05); color: #3c763d; }
.alert h4 { margin: 0 0 9px; font-size: 18px; line-height: 20px; font-weight: normal; }
.alert p { margin: 0; }
.alert-close { position: absolute; right: 15px; top: 19px; }
h3 { margin: 20px 0 10px; font-size: 24px; line-height: 26px; font-weight: normal; }
.details { margin: 0; display: grid; grid-template-columns: 228px 1fr; }
.details dt, .details dd { margin: 0; padding: 8px; min-height: 37px; border-top: 1px solid #ddd; }
.details dt { -webkit-text-stroke: .55px #333; }
.details .state { display: flex; align-items: center; padding: 10px 8px 6px; }
.label { height: 18px; display: flex; align-items: center; padding: 0 6px; border-radius: 3px; background: #5cb85c; color: #fff; font-size: 10.500px; line-height: 16px; -webkit-text-stroke: .45px #fff; }
.dot { margin: 0 3px 0 1px; }
.help { margin: -1px 0 0 17px; font-size: 12px; color: #337ab7; }
pre { margin: 0; height: 560px; padding: 9.500px; border: 1px solid #ccc; border-radius: 4px; background: #f5f5f5; color: #6a6a6a; font: 13px/18px "Liberation Mono", monospace; }
.scrollbar { width: 15px; flex: none; display: flex; flex-direction: column; background: #f1f1f1; }
.thumb { width: 11px; height: 103px; margin: 1px 0 0 2px; background: #bcbcbc; border: 1px solid #a8a8a8; }
.down { margin-top: auto; }
```
